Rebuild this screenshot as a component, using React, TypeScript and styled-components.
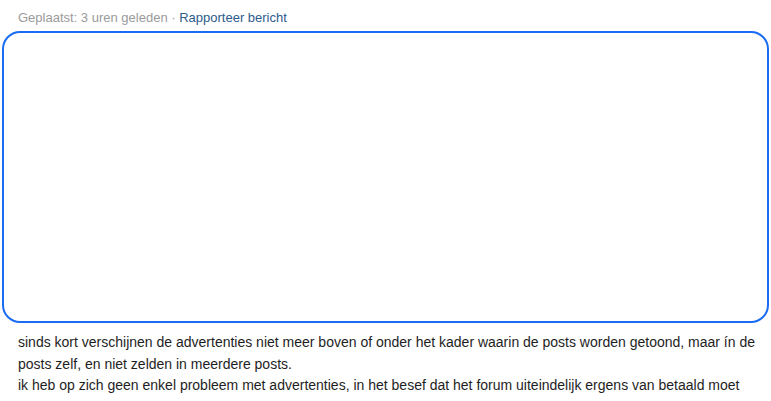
import React from "react";
import styled, { createGlobalStyle } from "styled-components";

const Global = createGlobalStyle`
  html, body { margin: 0; padding: 0; background: #fff; }
  body { font-family: "Liberation Sans", Arial, Helvetica, sans-serif; }
`;

const Post = styled.div`
  padding: 9px 2px 0 2px;
  display: flex;
  flex-direction: column;
`;

const Meta = styled.div`
  padding-left: 16px;
  font-size: 13px;
  line-height: 17px;
  color: #9a9a9a;
`;

const MetaLink = styled.a`
  color: #2d5b8c;
  text-decoration: none;
`;

const AdFrame = styled.div`
  margin-top: 5px;
  height: 292px;
  border: 2px solid #1a6cf3;
  border-radius: 18px;
  box-sizing: border-box;
`;

const Body = styled.div`
  padding: 9px 4px 0 16px;
  font-size: 14px;
  line-height: 21.5px;
  color: #1e1e1e;
`;

export default function App() {
  return (
    <>
      <Global />
      <Post>
        <Meta>
          Geplaatst: 3 uren geleden · <MetaLink href="#">Rapporteer bericht</MetaLink>
        </Meta>
        <AdFrame />
        <Body>
          sinds kort verschijnen de advertenties niet meer boven of onder het kader waarin de posts worden getoond, maar ín de posts zelf, en niet zelden in meerdere posts.
          <br />
          ik heb op zich geen enkel probleem met advertenties, in het besef dat het forum uiteindelijk ergens van betaald moet
        </Body>
      </Post>
    </>
  );
}
